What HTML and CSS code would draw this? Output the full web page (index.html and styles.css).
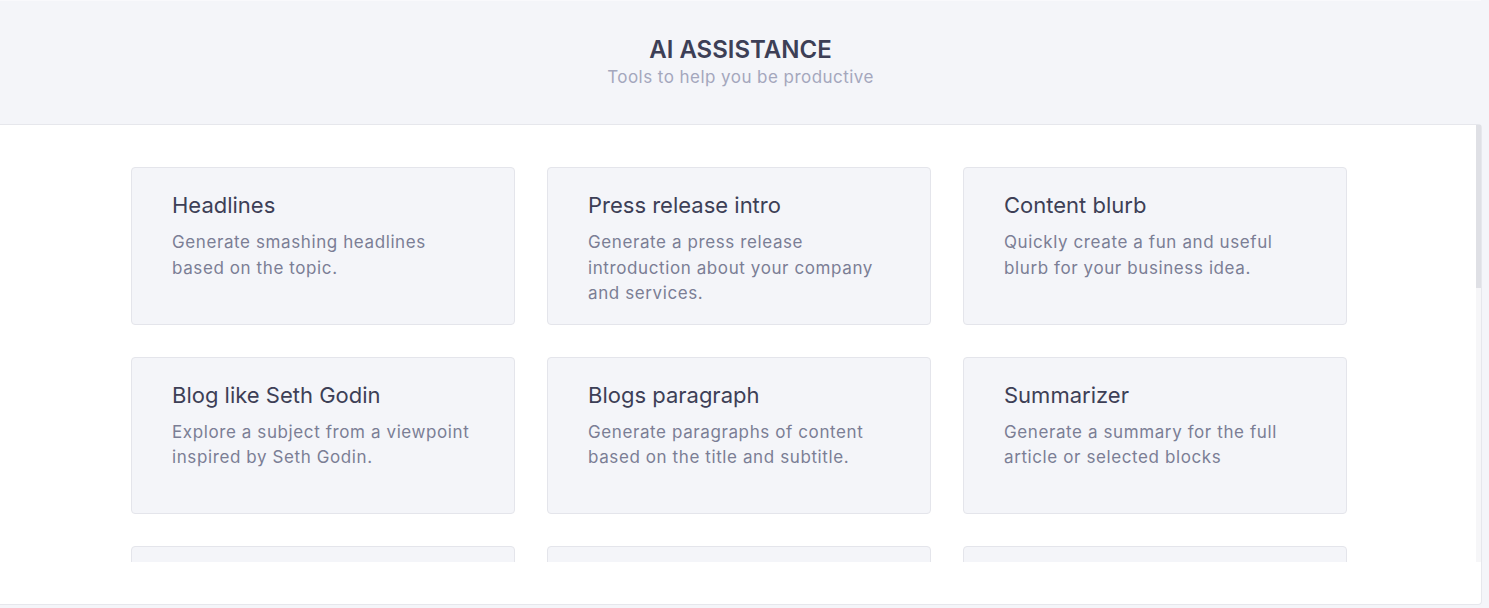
FILE: index.html
```html
<!DOCTYPE html>
<html lang="en">
<head>
    <meta charset="UTF-8">
    <meta name="viewport" content="width=device-width, initial-scale=1.0">
    <title>AI Assistance</title>
    <link rel="stylesheet" href="styles.css">
</head>
<body>
    <header class="page-header">
        <h1>AI ASSISTANCE</h1>
        <p>Tools to help you be productive</p>
    </header>
    <main class="panel">
        <div class="tools-scroll">
            <ul class="tools">
                <li class="tool">
                    <h2>Headlines</h2>
                    <p>Generate smashing headlines based on the topic.</p>
                </li>
                <li class="tool">
                    <h2>Press release intro</h2>
                    <p>Generate a press release introduction about your company and services.</p>
                </li>
                <li class="tool">
                    <h2>Content blurb</h2>
                    <p>Quickly create a fun and useful blurb for your business idea.</p>
                </li>
                <li class="tool">
                    <h2>Blog like Seth Godin</h2>
                    <p>Explore a subject from a viewpoint inspired by Seth Godin.</p>
                </li>
                <li class="tool">
                    <h2>Blogs paragraph</h2>
                    <p>Generate paragraphs of content based on the title and subtitle.</p>
                </li>
                <li class="tool">
                    <h2>Summarizer</h2>
                    <p>Generate a summary for the full article or selected blocks</p>
                </li>
                <li class="tool"></li>
                <li class="tool"></li>
                <li class="tool"></li>
            </ul>
        </div>
        <div class="scroll-rail">
            <div class="scroll-thumb"></div>
        </div>
    </main>
</body>
</html>
```

FILE: styles.css
```css
* {
    margin: 0;
    padding: 0;
    box-sizing: border-box;
}

body {
    font-family: Inter, "Noto Sans", sans-serif;
    background-color: #f4f5f9;
    color: #3d3f56;
    height: 608px;
    overflow: hidden;
}

.page-header {
    width: 1481px;
    height: 124px;
    padding-top: 35px;
    text-align: center;
    border-top: 1px solid #f9f9fc;
}

.page-header h1 {
    font-size: 24px;
    font-weight: 600;
    line-height: 28px;
    color: #3d3f56;
}

.page-header p {
    margin-top: 1px;
    font-size: 17px;
    line-height: 24px;
    letter-spacing: 0.45px;
    color: #a4a7bd;
}

.panel {
    display: flex;
    width: 1482px;
    padding-bottom: 42px;
    background-color: #fff;
    border-top: 1px solid #e6e7ec;
    border-right: 1px solid #e6e7ec;
    border-bottom: 1px solid #e6e7ec;
    border-radius: 0 4px 4px 0;
}

.tools-scroll {
    flex: 1;
    height: 437px;
    overflow: hidden;
}

.scroll-rail {
    width: 5px;
    height: 437px;
    background-color: #f6f6f8;
}

.scroll-thumb {
    height: 163px;
    background-color: #dfe0e5;
}

.tools {
    list-style-type: none;
    display: grid;
    grid-template-columns: repeat(3, 384px);
    grid-auto-rows: 157.5px;
    gap: 32px;
    justify-content: center;
    padding: 42px 0 40px 2px;
}

.tool {
    padding: 22px 40px;
    background-color: #f4f5f9;
    border: 1px solid #e4e5eb;
    border-radius: 4px;
}

.tool h2 {
    font-size: 22px;
    font-weight: 400;
    line-height: 30px;
    color: #3d3f56;
    margin-bottom: 10px;
}

.tool p {
    font-size: 17px;
    line-height: 25.5px;
    letter-spacing: 0.6px;
    color: #7b7e95;
}
```
